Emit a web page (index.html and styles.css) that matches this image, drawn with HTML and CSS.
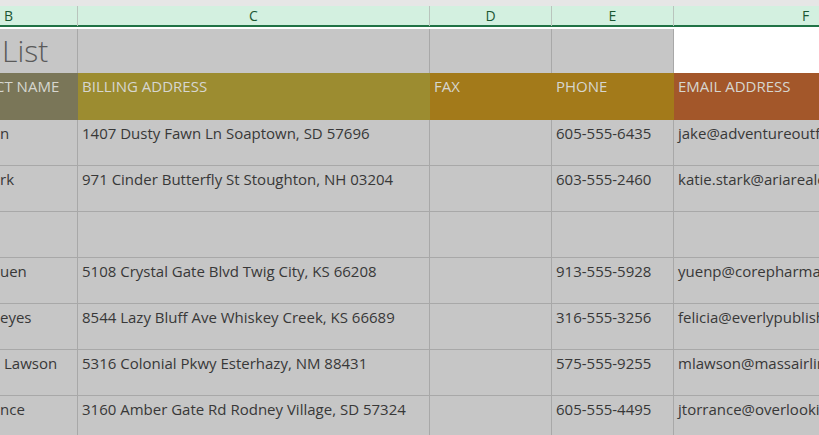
FILE: index.html
```html
<!DOCTYPE html>
<html>
<head>
<meta charset="utf-8">
<link rel="stylesheet" href="styles.css">
</head>
<body>
<div class="sheet">
  <div class="topstrip"></div>
  <div class="colheads">
    <div class="ch ch-b">B</div>
    <div class="ch ch-c">C</div>
    <div class="ch">D</div>
    <div class="ch">E</div>
    <div class="ch ch-f">F</div>
  </div>
  <div class="sep"></div>
  <div class="grid">
    <div class="cell title-cell"><span class="title">List</span></div>
    <div class="cell title-blank"></div>
    <div class="cell title-blank"></div>
    <div class="cell title-blank"></div>
    <div class="cell title-white"></div>

    <div class="cell hd hd-b"><span class="clip-c">CT NAME</span></div>
    <div class="cell hd hd-c">BILLING ADDRESS</div>
    <div class="cell hd hd-d">FAX</div>
    <div class="cell hd hd-e">PHONE</div>
    <div class="cell hd hd-f">EMAIL ADDRESS</div>

    <div class="cell name">n</div>
    <div class="cell">1407 Dusty Fawn Ln Soaptown, SD 57696</div>
    <div class="cell"></div>
    <div class="cell">605-555-6435</div>
    <div class="cell">jake@adventureoutf</div>

    <div class="cell name">rk</div>
    <div class="cell">971 Cinder Butterfly St Stoughton, NH 03204</div>
    <div class="cell"></div>
    <div class="cell">603-555-2460</div>
    <div class="cell">katie.stark@ariareale</div>

    <div class="cell name"></div>
    <div class="cell"></div>
    <div class="cell"></div>
    <div class="cell"></div>
    <div class="cell"></div>

    <div class="cell name">uen</div>
    <div class="cell">5108 Crystal Gate Blvd Twig City, KS 66208</div>
    <div class="cell"></div>
    <div class="cell">913-555-5928</div>
    <div class="cell">yuenp@corepharma</div>

    <div class="cell name">eyes</div>
    <div class="cell">8544 Lazy Bluff Ave Whiskey Creek, KS 66689</div>
    <div class="cell"></div>
    <div class="cell">316-555-3256</div>
    <div class="cell">felicia@everlypublish</div>

    <div class="cell name name-sp">Lawson</div>
    <div class="cell">5316 Colonial Pkwy Esterhazy, NM 88431</div>
    <div class="cell"></div>
    <div class="cell">575-555-9255</div>
    <div class="cell">mlawson@massairlin</div>

    <div class="cell name">nce</div>
    <div class="cell">3160 Amber Gate Rd Rodney Village, SD 57324</div>
    <div class="cell"></div>
    <div class="cell">605-555-4495</div>
    <div class="cell">jtorrance@overlooki</div>
  </div>
</div>
</body>
</html>
```

FILE: styles.css
```css
html, body {
  margin: 0;
  padding: 0;
  background: #c6c6c6;
  overflow: hidden;
  width: 819px;
  height: 435px;
}
.sheet {
  font-family: "Open Sans", "Noto Sans", sans-serif;
  font-size: 15px;
  color: #383838;
}
.topstrip {
  height: 6px;
  background: #e6e6e6;
}
.colheads {
  display: grid;
  grid-template-columns: 78px 352px 122px 122px 1fr;
  height: 19px;
  background: #d3f0e0;
  border-bottom: 2px solid #217346;
}
.ch {
  border-right: 1px solid #b9c4bd;
  text-align: center;
  font-size: 14px;
  line-height: 20px;
  color: #1b5733;
}
.ch-b {
  text-align: left;
  padding-left: 4px;
}
.ch-f {
  border-right: none;
  padding-left: 128px;
  text-align: left;
}
.sep {
  height: 2px;
  background: #ffffff;
}
.grid {
  display: grid;
  grid-template-columns: 78px 352px 122px 122px 1fr;
  grid-template-rows: 44px 47px repeat(7, 46px);
}
.cell {
  box-sizing: border-box;
  border-right: 1px solid #a8a8a8;
  border-bottom: 1px solid #a8a8a8;
  padding: 3px 0 0 4px;
  white-space: nowrap;
  overflow: hidden;
  line-height: 20px;
}
.cell:nth-child(5n) {
  border-right: none;
}
.name {
  padding-left: 0;
}
.name-sp {
  padding-left: 4px;
}
.title-cell,
.title-blank {
  border-bottom: none;
}
.title-cell {
  padding: 0 0 0 2px;
}
.title {
  font-size: 30px;
  font-weight: 300;
  line-height: 44px;
  color: #5a5a5a;
}
.title-white {
  background: #ffffff;
  border-bottom: none;
}
.hd {
  border: none;
  color: #d6d6d0;
  padding-top: 3px;
}
.hd-b { background: #7a7658; padding-left: 0; }
.clip-c { display: inline-block; margin-left: -5px; }
.hd-c { background: #9c8c30; }
.hd-d { background: #a37a1a; }
.hd-e { background: #a37a1a; }
.hd-f { background: #a3572a; }
```
